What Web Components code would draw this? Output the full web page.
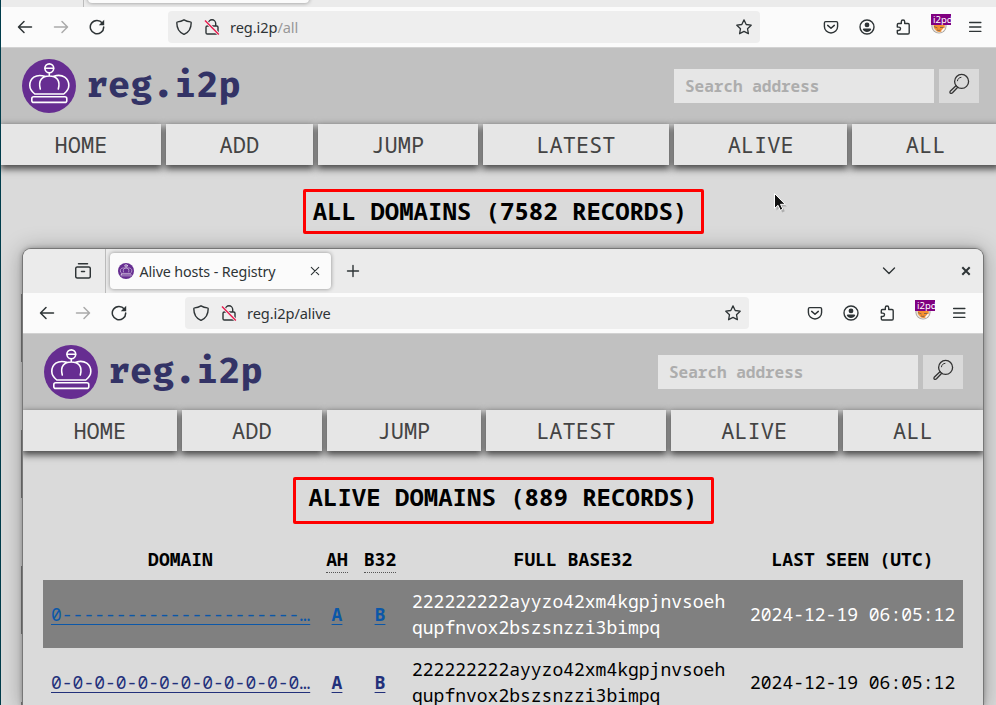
<!DOCTYPE html>
<html lang="en"><head><meta charset="utf-8"><title>Registry</title>
<style>
html,body{margin:0;height:705px;overflow:hidden}
body{position:relative;background:#003c4b;--mono:"Noto Sans Mono","DejaVu Sans Mono",monospace;--ui:"Noto Sans",sans-serif;font-family:var(--mono)}
browser-window{position:absolute}
.back{left:1px;top:-37px;width:998px;height:742px}
.front{left:23px;top:249px;width:960px;height:456px;border-radius:8px 8px 0 0;box-shadow:0 0 0 1px #777,0 0 5px 1px rgba(0,0,0,.28),0 2px 22px 2px rgba(0,0,0,.28)}
red-frame{position:absolute}
.pointer{position:absolute;left:772px;top:192px}
</style></head><body>
<browser-window class="back" url="reg.i2p" path="/all" bar="167 239">
  <registry-page><page-title>ALL DOMAINS (7582 RECORDS)</page-title><stripe-rows></stripe-rows></registry-page>
</browser-window>
<red-frame style="left:303px;top:189px;width:401px;height:45px"></red-frame>
<ui-icon class="pointer" name="pointer" size="22"></ui-icon>
<browser-window class="front" label="Alive hosts - Registry" url="reg.i2p/alive" path="" bar="162 234">
  <registry-page><page-title>ALIVE DOMAINS (889 RECORDS)</page-title><domain-table></domain-table></registry-page>
</browser-window>
<red-frame style="left:293px;top:477px;width:421px;height:47px"></red-frame>
<script>
const s='fill="none" stroke="currentColor" stroke-linecap="round" stroke-linejoin="round"';
const ICONS={
 back:['0 0 16 16',`<path ${s} stroke-width="1.5" d="M14.5 8H1.8M7 2.5 1.5 8 7 13.5"/>`],
 forward:['0 0 16 16',`<path ${s} stroke-width="1.5" d="M1.5 8h12.7M9 2.5 14.5 8 9 13.5"/>`],
 reload:['0 0 16 16',`<path ${s} stroke-width="1.5" d="M13.3 4A6.7 6.7 0 1 0 14.7 8"/><path fill="currentColor" d="M15.2.8v5.4H9.8z"/>`],
 shield:['0 0 16 16',`<path ${s} stroke-width="1.4" d="M8 .8c2 1.2 4.2 1.9 6.4 2.1.5 0 .8.4.8.8 0 5.5-2.3 9.600-7.200 11.700C3.100 13.300.800 9.200.800 3.700c0-.4.3-.8.8-.8C3.800 2.700 6 2 8 .8z"/>`],
 lock:['0 0 16 16',`<path ${s} stroke-width="1.4" d="M4.300 7V4.500a3.700 3.700 0 0 1 7.400 0V7M3.300 7h9.400q1.300 0 1.300 1.300v5.400q0 1.300-1.300 1.300H3.300Q2 15 2 13.700V8.300Q2 7 3.300 7z"/><path d="M1 1.600 14.800 15.400" stroke="#eee" stroke-width="3"/><path d="M1 1.600 14.800 15.400" stroke="#e8174b" stroke-width="1.400"/>`],
 star:['0 0 16 16',`<path ${s} stroke-width="1.300" d="m8 .9 2.200 4.600 5 .7-3.700 3.500.9 5L8 12.400l-4.400 2.300.9-5L.8 6.200l5-.7z"/>`],
 pocket:['0 0 16 16',`<path ${s} stroke-width="1.400" d="M2.700 2.600h10.600q1.300 0 1.300 1.300v3.500A6.600 6.600 0 0 1 1.400 7.400V3.900q0-1.300 1.300-1.300z"/><path ${s} stroke-width="1.500" d="M4.700 6.400 8 9.300l3.300-2.900"/>`],
 account:['0 0 16 16',`<circle cx="8" cy="8" r="7" ${s} stroke-width="1.400"/><circle cx="8" cy="5.900" r="2.400" fill="currentColor"/><path fill="currentColor" d="M4.900 9.500h6.200q1.100 0 1.100 1.100c-.8 1.500-2.300 2.300-4.200 2.300s-3.400-.8-4.200-2.300q0-1.100 1.100-1.100z"/>`],
 puzzle:['0 0 16 16',`<path ${s} stroke-width="1.400" d="M2.300 7V5.700q0-1.200 1.200-1.200h2.800V2.700a1.700 1.700 0 0 1 3.400 0v1.800h3.300q1.200 0 1.200 1.200v8q0 1.300-1.200 1.300H3.500q-1.200 0-1.200-1.300v-2.200h1.500a1.700 1.700 0 0 0 0-3.400H2.300z"/>`],
 menu:['0 0 16 16',`<path ${s} stroke-width="1.300" d="M2.600 3.500h11.300M2.600 8h11.300M2.600 12.400h11.300"/>`],
 fox:['0 0 16 16','<circle cx="8" cy="8" r="7.600" fill="#a9a39c"/><circle cx="8" cy="8" r="6.700" fill="#e8e4de"/><path d="M2.500 5h11.200v5.500L11 13.500q-3 1-5.500-.5L3 10z" fill="#f7902f"/><path d="m3 8.500 3.500 1.500M9 9.500h3.500M6 12q2 1 3.500 0" stroke="#84664c" fill="none"/><path d="m10.500 13.500 3-3.500" stroke="#fff" stroke-width="1.200"/>'],
 archive:['0 0 16 16',`<path ${s} stroke-width="1.500" d="M3.500.8h9M2.200 4h11.600q1.500 0 1.500 1.500v7.900q0 1.500-1.500 1.500H2.200Q.7 14.900.7 13.400V5.500Q.7 4 2.200 4zM6.500 8.500h3"/>`],
 close:['0 0 16 16',`<path ${s} stroke-width="1.100" d="m4.300 4.300 7.400 7.400m0-7.400-7.400 7.400"/>`],
 bold:['0 0 16 16','<path stroke="#2e3436" stroke-width="2" d="m4.300 4.300 7.400 7.400m0-7.400-7.400 7.400"/>'],
 plus:['0 0 16 16',`<path ${s} stroke-width="1.400" d="M8 2.500v11M2.500 8h11"/>`],
 chevron:['0 0 16 16',`<path ${s} stroke-width="1.400" d="m2.500 5 5.500 5.500L13.500 5"/>`],
 crown:['0 0 54 54','<circle cx="27" cy="27" r="27" fill="#662d91"/><g fill="none" stroke="#fff" stroke-width="1.600" stroke-linecap="round" stroke-linejoin="round"><circle cx="27.300" cy="9.300" r="4.400"/><path d="M23 9.300h8.600M27.300 13.700V17M18.300 30C16 21.500 20 17 27.300 17S38.600 21.500 36.300 30M22.800 17.200C13.500 14.500 7.800 19.500 7.800 26.500c0 4.500 2.500 6.500 5 8.500h29c2.500-2 5-4 5-8.500C46.800 19.500 41 14.500 31.800 17.200"/><rect x="9.800" y="37.800" width="35" height="5.600" rx="2"/></g>'],
 search:['0 0 22 22','<g fill="none" stroke="#333" stroke-width="1.300"><circle cx="13.600" cy="8.400" r="7"/><path stroke-width="1" d="M9.400 8.200c.2-2.300 1.700-3.700 4-3.900"/><path stroke-linejoin="round" d="m8.500 12.200-6.300 6.100q-.8 1.700.8 2 .8.200 1.500-.5l5.700-6"/></g>'],
 pointer:['0 0 22 22','<path d="M4.500 4.500v14l3.300-3 2.400 5 2.600-1.200-2.300-4.900h4.300z" fill="#0003"/><path d="M2.500 1.500v15l3.500-3.200 2.300 5 2.500-1.200-2.300-4.800h4.700z" fill="#111" stroke="#fff" stroke-width="1"/>']
};
function define(name,css,html){
  customElements.define(name,class extends HTMLElement{
    connectedCallback(){
      if(this.shadowRoot)return;
      const root=this.attachShadow({mode:'open'});
      root.innerHTML='<style>'+css+'</style>'+(typeof html==='function'?html(this):html);
    }
  });
}
define('ui-icon',':host{display:block;flex:none;line-height:0}svg{display:block}',e=>{
  const [v,p]=ICONS[e.getAttribute('name')],z=e.getAttribute('size')||16;
  return `<svg width="${z}" height="${z}" viewBox="${v}">${p}</svg>`});
define('red-frame',':host{display:block;box-sizing:border-box;border:3px solid #f00;border-radius:2px}','');
define('page-title',':host{display:block;text-align:center;font:bold 24px/34px var(--mono);color:#000;padding-top:29px;height:53px}','<slot></slot>');
define('stripe-rows',':host{display:block;margin:47px 20px 0;height:420px;background:repeating-linear-gradient(#808080 0 68px,#dadada 68px 136px)}','');
define('i2p-badge',':host{display:block;position:relative;width:20px;height:24px}ui-icon{position:absolute;left:0;top:4px}b{position:absolute;left:0;top:0;width:20px;height:11px;overflow:hidden;background:#800080;color:#fff;font:9.500px/11px var(--ui);text-indent:2px;white-space:nowrap}','<ui-icon name="fox"></ui-icon><b>i2pd</b>');
define('tab-strip',`:host{display:flex;height:44px;background:#ebebeb;color:#2e3436;border-radius:8px 8px 0 0}
 .left{width:82px;border-right:1px solid #bbb;display:flex;align-items:center;justify-content:flex-end;box-sizing:content-box}.left ui-icon{margin-right:14px}
 .tab{width:221px;height:36px;margin:4px 0 0 4px;background:#fbfbfb;border-radius:4px;box-shadow:0 0 4px rgba(0,0,0,.4);display:flex;align-items:center;box-sizing:border-box;padding:0 8px 0 8px}
 .tab span{flex:1;margin:2px 0 0 5.500px;font:14.300px/20px var(--ui);letter-spacing:-.12px;white-space:nowrap}
 .plus{margin:14px 0 0 14px}.chev{margin:14px 0 0 auto}.x{margin:14px 9px 0 61px}`,e=>
 `<div class="left"><ui-icon name="archive"></ui-icon></div><div class="tab"><ui-icon name="crown"></ui-icon><span>${e.getAttribute('label')}</span><ui-icon name="close"></ui-icon></div><ui-icon class="plus" name="plus"></ui-icon><ui-icon class="chev" name="chevron"></ui-icon><ui-icon class="x" name="bold"></ui-icon>`);
define('nav-toolbar',`:host{display:flex;height:40px;background:#fbfbfb;border-bottom:1px solid #d2d2d2;color:#2e3436;align-items:center;box-sizing:content-box}
 .nav{display:flex;gap:20px;padding-left:16px;box-sizing:border-box}.fw{color:#aaa}
 .url{flex:1;height:32px;background:#eee;border-radius:4px;display:flex;align-items:center;box-sizing:border-box;padding:0 8px;font:14.600px/20px var(--ui);white-space:nowrap}
 .url span{flex:1;letter-spacing:-.08px}.url i{font-style:normal;color:#999}.lock{margin:0 10px 0 12px}
 .tools{display:flex;align-items:center;box-sizing:border-box;justify-content:flex-end;gap:20px;padding-right:16px}
 i2p-badge{margin:-2px -4px 0 0}`,e=>{
 const [l,r]=e.getAttribute('bar').split(' ');
 return `<div class="nav" style="width:${l}px"><ui-icon name="back"></ui-icon><ui-icon class="fw" name="forward"></ui-icon><ui-icon name="reload"></ui-icon></div>
 <div class="url"><ui-icon name="shield"></ui-icon><ui-icon class="lock" name="lock"></ui-icon><span>${e.getAttribute('url')}<i>${e.getAttribute('path')}</i></span><ui-icon name="star"></ui-icon></div>
 <div class="tools" style="width:${r}px"><ui-icon name="pocket"></ui-icon><ui-icon name="account"></ui-icon><ui-icon name="puzzle"></ui-icon><i2p-badge></i2p-badge><ui-icon name="menu"></ui-icon></div>`});
define('browser-window',':host{display:flex;flex-direction:column;overflow:visible;background:#dadada}.page{flex:1;overflow:hidden}',e=>
 `<tab-strip label="${e.getAttribute('label')||''}"></tab-strip><nav-toolbar url="${e.getAttribute('url')}" path="${e.getAttribute('path')}" bar="${e.getAttribute('bar')}"></nav-toolbar><div class="page"><slot></slot></div>`);
define('site-header',`:host{display:flex;height:76px;background:#c1c1c1;box-sizing:border-box;padding:11px 20px 0 21px}
 .name{flex:1;margin-left:10px;font:bold 36.800px/52px "Fira Mono","Fira Code",var(--mono);color:#333366}
 .field{width:260px;height:34px;margin:10px 5px 0 0;background:#e6e6e6;box-sizing:border-box;padding:0 11px;font:bold 16px/34px var(--mono);color:#adadad}
 .btn{width:40px;height:34px;margin-top:10px;background:#dadada;display:flex;justify-content:center;padding-top:4px;box-sizing:border-box}`,
 '<ui-icon name="crown" size="54"></ui-icon><div class="name">reg.i2p</div><div class="field">Search address</div><div class="btn"><ui-icon name="search" size="22"></ui-icon></div>');
define('site-nav',`:host{display:flex;gap:5px;height:41px}
 a{flex:1 1 auto;position:relative;color:#444;text-align:center;font:22px/41px var(--mono);box-shadow:0 3px 7px 1px rgba(0,0,0,.68)}
 a::after{content:"";position:absolute;inset:0;background:#e6e6e6;z-index:1}span{position:relative;z-index:2}`,
 ['HOME','ADD','JUMP','LATEST','ALIVE','ALL'].map(t=>`<a><span>${t}</span></a>`).join(''));
define('registry-page',':host{display:block;background:#dadada}','<site-header></site-header><site-nav></site-nav><slot></slot>');
const row=(cls,d)=>`<tr class="${cls}"><td><a>${d}…</a></td><td><a><b>A</b></a></td><td><a><b>B</b></a></td><td>222222222ayyzo42xm4kgpjnvsoeh<br>qupfnvox2bszsnzzi3bimpq</td><td>2024-12-19 06:05:12</td></tr>`;
define('domain-table',`:host{display:block;padding:0 20px;margin-top:7px}
 table{width:920px;table-layout:fixed;border-collapse:collapse;font:18px/26px var(--mono);color:#000}
 th{padding:0 0 2px;height:38px;white-space:nowrap}td{padding:8px;height:52px;white-space:nowrap}
 abbr{display:inline-block;border-bottom:1px dotted #555;line-height:25px;position:relative}
 td:nth-child(2),td:nth-child(3){text-align:center}
 a{color:#22307a;text-decoration:underline;text-decoration-thickness:1px;text-underline-offset:3px}
 .on{background:#808080;color:#fff}.on a{color:#0b57a8}`,
 `<table><colgroup><col style="width:275px"><col style="width:38px"><col style="width:48px"><col style="width:338px"><col style="width:221px"></colgroup><tr><th>DOMAIN</th><th><abbr>AH</abbr></th><th><abbr>B32</abbr></th><th>FULL BASE32</th><th>LAST SEEN (UTC)</th></tr>${row('on','0'+'-'.repeat(22))}${row('','0'+'-0'.repeat(11))}</table>`);
</script></body></html>
